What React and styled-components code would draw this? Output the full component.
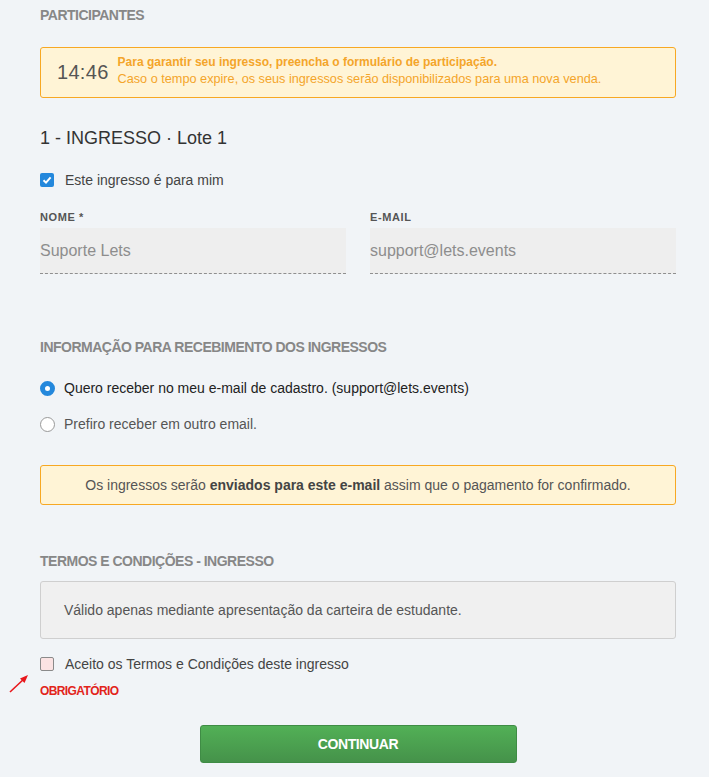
import React, { useState } from 'react';
import styled, { createGlobalStyle, css } from 'styled-components';

const GlobalStyle = createGlobalStyle`
  html, body {
    margin: 0;
    padding: 0;
    background: #f1f4f7;
  }
  body {
    font-family: 'Liberation Sans', Arial, sans-serif;
    color: #333;
  }
`;

const Page = styled.div`
  width: 636px;
  padding: 0 33px 14px 40px;
  display: flex;
  flex-direction: column;
`;

const SectionTitle = styled.h2`
  margin: ${({ mt }) => mt || '0'} 0 0;
  font-size: 14px;
  font-weight: bold;
  color: #878787;
  line-height: 18px;
  letter-spacing: -0.5px;
`;

const TimerBox = styled.div`
  margin-top: 23px;
  height: 49px;
  display: flex;
  align-items: center;
  gap: 9px;
  padding: 0 16px;
  background: #fff4d6;
  border: 1px solid #f7a823;
  border-radius: 3px;
`;

const Clock = styled.div`
  font-size: 20px;
  color: #555;
  letter-spacing: 0.3px;
`;

const TimerText = styled.div`
  font-size: 12.7px;
  color: #f4a52a;
  line-height: 17px;
  margin-top: -3px;
`;

const Strong = styled.div`
  font-weight: bold;
  font-size: 12px;
`;

const TicketTitle = styled.h3`
  margin: 28px 0 0;
  font-size: 18px;
  font-weight: normal;
  color: #333;
  line-height: 24px;
`;

const CheckRow = styled.label`
  display: flex;
  align-items: center;
  gap: 11px;
  margin-top: ${({ mt }) => mt || '0'};
  font-size: 14px;
  color: #444;
  line-height: 18px;
`;

const Box = styled.span`
  width: 12px;
  height: 12px;
  border-radius: 2px;
  display: inline-flex;
  align-items: center;
  justify-content: center;
  flex-shrink: 0;
  ${({ checked }) =>
    checked
      ? css`
          width: 14px;
          height: 14px;
          background: #2488dc;
        `
      : css`
          background: #fbe3e3;
          border: 1px solid #8a8a8a;
        `}
`;

const FieldGrid = styled.div`
  margin-top: 21px;
  display: grid;
  grid-template-columns: 1fr 1fr;
  gap: 24px;
`;

const Field = styled.div`
  display: flex;
  flex-direction: column;
`;

const FieldLabel = styled.div`
  font-size: 11px;
  font-weight: bold;
  color: #555;
  letter-spacing: 0.6px;
  line-height: 14px;
  margin-bottom: 4px;
`;

const Input = styled.div`
  height: 45px;
  background: #eeeeee;
  border-bottom: 1px dashed #8f8f8f;
  display: flex;
  align-items: center;
  font-size: 16px;
  color: #8d8d8d;
`;

const RadioRow = styled.label`
  display: flex;
  align-items: center;
  gap: 9px;
  margin-top: ${({ mt }) => mt || '0'};
  font-size: 14px;
  color: ${({ checked }) => (checked ? '#222' : '#555')};
  line-height: 18px;
`;

const Radio = styled.span`
  width: 15px;
  height: 15px;
  border-radius: 50%;
  box-sizing: border-box;
  flex-shrink: 0;
  ${({ checked }) =>
    checked
      ? css`
          border: 5px solid #2488dc;
          background: #fff;
        `
      : css`
          border: 1px solid #999;
          background: #fff;
        `}
`;

const Notice = styled.div`
  margin-top: 32px;
  height: 38px;
  display: flex;
  align-items: center;
  justify-content: center;
  background: #fff4d6;
  border: 1px solid #f7a823;
  border-radius: 3px;
  font-size: 14px;
  color: #555;
  b {
    color: #444;
  }
`;

const Terms = styled.div`
  margin-top: 11px;
  height: 56px;
  display: flex;
  align-items: center;
  padding: 0 23px;
  background: #f0f0f0;
  border: 1px solid #cfcfcf;
  border-radius: 3px;
  font-size: 14px;
  color: #555;
`;

const Required = styled.div`
  position: relative;
  margin-top: 10px;
  font-size: 12px;
  font-weight: bold;
  color: #e2231a;
  line-height: 16px;
  letter-spacing: -0.6px;
`;

const Arrow = styled.svg`
  position: absolute;
  left: -32px;
  top: -12px;
`;

const ButtonRow = styled.div`
  margin-top: 26px;
  display: flex;
  justify-content: center;
`;

const Button = styled.button`
  width: 317px;
  height: 38px;
  border: 1px solid #3f8c45;
  border-radius: 3px;
  background: linear-gradient(#52b056, #45924a);
  color: #fff;
  font-family: 'Liberation Sans', sans-serif;
  font-size: 14px;
  font-weight: bold;
  letter-spacing: -0.4px;
  cursor: pointer;
`;

const Check = () => (
  <svg width="10" height="10" viewBox="0 0 10 10">
    <path d="M1.5 5.2 L4 7.6 L8.6 2.4" fill="none" stroke="#fff" strokeWidth="2" />
  </svg>
);

export default function App() {
  const [mine, setMine] = useState(true);
  const [choice, setChoice] = useState(0);
  const [accepted, setAccepted] = useState(false);

  return (
    <Page>
      <GlobalStyle />
      <SectionTitle mt="6px">PARTICIPANTES</SectionTitle>

      <TimerBox>
        <Clock>14:46</Clock>
        <TimerText>
          <Strong>Para garantir seu ingresso, preencha o formulário de participação.</Strong>
          <div>Caso o tempo expire, os seus ingressos serão disponibilizados para uma nova venda.</div>
        </TimerText>
      </TimerBox>

      <TicketTitle>1 - INGRESSO · Lote 1</TicketTitle>

      <CheckRow mt="21px" onClick={() => setMine(!mine)}>
        <Box checked={mine}>{mine && <Check />}</Box>
        Este ingresso é para mim
      </CheckRow>

      <FieldGrid>
        <Field>
          <FieldLabel>NOME *</FieldLabel>
          <Input>Suporte Lets</Input>
        </Field>
        <Field>
          <FieldLabel>E-MAIL</FieldLabel>
          <Input>support@lets.events</Input>
        </Field>
      </FieldGrid>

      <SectionTitle mt="64px">INFORMAÇÃO PARA RECEBIMENTO DOS INGRESSOS</SectionTitle>

      <RadioRow mt="23px" checked={choice === 0} onClick={() => setChoice(0)}>
        <Radio checked={choice === 0} />
        Quero receber no meu e-mail de cadastro. (support@lets.events)
      </RadioRow>
      <RadioRow mt="18px" checked={choice === 1} onClick={() => setChoice(1)}>
        <Radio checked={choice === 1} />
        Prefiro receber em outro email.
      </RadioRow>

      <Notice>
        <span>
          Os ingressos serão <b>enviados para este e-mail</b> assim que o pagamento for confirmado.
        </span>
      </Notice>

      <SectionTitle mt="47px">TERMOS E CONDIÇÕES - INGRESSO</SectionTitle>

      <Terms>Válido apenas mediante apresentação da carteira de estudante.</Terms>

      <CheckRow mt="16px" onClick={() => setAccepted(!accepted)}>
        <Box checked={accepted}>{accepted && <Check />}</Box>
        Aceito os Termos e Condições deste ingresso
      </CheckRow>

      <Required>
        <Arrow width="24" height="24" viewBox="0 0 24 24">
          <path d="M2 21 L17 7" stroke="#e8161b" strokeWidth="1.6" />
          <path d="M20 4 L12 7.5 L16.5 12 Z" fill="#e8161b" />
        </Arrow>
        OBRIGATÓRIO
      </Required>

      <ButtonRow>
        <Button>CONTINUAR</Button>
      </ButtonRow>
    </Page>
  );
}
